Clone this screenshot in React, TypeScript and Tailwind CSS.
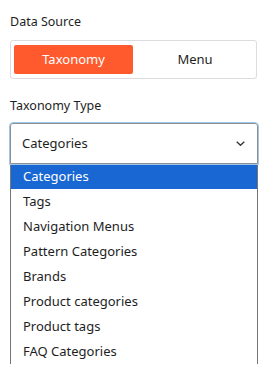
const options = [
	"Categories",
	"Tags",
	"Navigation Menus",
	"Pattern Categories",
	"Brands",
	"Product categories",
	"Product tags",
	"FAQ Categories",
];

export default function App() {
	return (
		<div
			className="h-[365px] w-[261px] overflow-hidden bg-white px-[10px] text-[#1e1e1e]"
			style={{ fontFamily: '"Noto Sans", "Open Sans", sans-serif' }}
		>
			<p className="pt-[13px] text-[12.5px] leading-[18px]">Data Source</p>
			<div className="mt-[9px] flex h-[39px] w-[247px] items-center gap-[4px] rounded-[3px] border border-[#dcdcde] px-[3px]">
				<button className="h-[29px] w-[119px] rounded-[2px] bg-[#ff5a2e] text-[13px] text-white">
					Taxonomy
				</button>
				<button className="h-[29px] flex-1 text-[13px] text-[#1e1e1e]">Menu</button>
			</div>
			<p className="mt-[18px] text-[12.5px] leading-[18px]">Taxonomy Type</p>
			<div className="mt-[8px] flex h-[41px] w-[248px] items-center justify-between rounded-t-[3px] border border-[#8c8f94] pl-[11px] pr-[12px] outline outline-1 outline-[#9ec7e6]">
				<span className="text-[13px]">Categories</span>
				<svg width="9" height="5" viewBox="0 0 9 5">
					<path d="M0.7 0.7l3.8 3.6 3.8-3.6" fill="none" stroke="#333" strokeWidth="1.3" />
				</svg>
			</div>
			<ul className="w-[248px] border-x border-[#767676]">
				{options.map((o, i) => (
					<li
						key={o}
						className={`flex h-[25px] items-center px-[12px] text-[13px] ${
							i === 0 ? "bg-[#1967d2] text-white" : "text-[#1e1e1e]"
						}`}
					>
						{o}
					</li>
				))}
			</ul>
		</div>
	);
}
